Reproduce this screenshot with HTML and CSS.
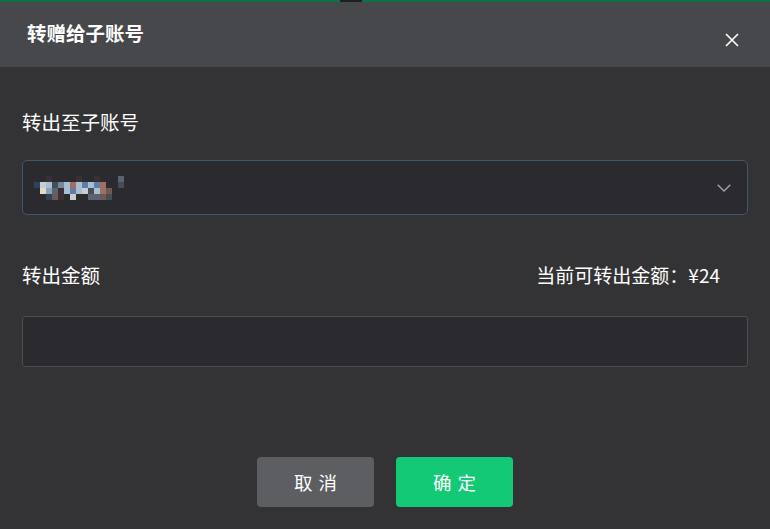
FILE: index.html
```html
<!DOCTYPE html>
<html lang="zh-CN">
<head>
<meta charset="utf-8">
<title>转赠给子账号</title>
<link rel="stylesheet" href="styles.css">
</head>
<body>
<div class="dialog">
  <div class="topline"><span class="notch"></span></div>
  <div class="header">
    <h1 class="title">转赠给子账号</h1>
    <button class="close" aria-label="关闭">
      <svg width="14" height="14" viewBox="0 0 14 14"><path d="M1 1L13 13M13 1L1 13" stroke="#fff" stroke-width="1.6" fill="none"/></svg>
    </button>
  </div>
  <div class="body">
    <div class="label">转出至子账号</div>
    <div class="select">
      <div class="mosaic">
        <span></span><span></span><span class="a"></span><span></span><span></span><span></span><span></span><span class="a"></span><span></span><span></span><span class="a"></span><span></span><span></span><span></span><span class="l"></span>
        <span class="b"></span><span class="c"></span><span class="d"></span><span class="e"></span><span class="f"></span><span class="d"></span><span class="g"></span><span class="d"></span><span class="h"></span><span class="d"></span><span class="h"></span><span class="g"></span><span></span><span></span><span class="e"></span>
        <span></span><span class="i"></span><span class="j"></span><span class="l"></span><span class="a"></span><span class="d"></span><span class="h"></span><span class="d"></span><span class="c"></span><span class="e"></span><span class="d"></span><span class="g"></span><span class="k"></span><span></span><span></span>
        <span></span><span></span><span class="b"></span><span class="k"></span><span class="a"></span><span></span><span class="c"></span><span></span><span></span><span class="l"></span><span class="l"></span><span class="k"></span><span class="e"></span><span></span><span></span>
      </div>
      <svg class="chevron" width="14" height="8" viewBox="0 0 14 8"><path d="M0.7 0.7L7 7L13.3 0.7" stroke="#a0a2a6" stroke-width="1.4" fill="none"/></svg>
    </div>
    <div class="row">
      <div class="label">转出金额</div>
      <div class="avail">当前可转出金额：¥24</div>
    </div>
    <div class="input"></div>
    <div class="actions">
      <button class="btn cancel">取消</button>
      <button class="btn ok">确定</button>
    </div>
  </div>
</div>
</body>
</html>
```
FILE: styles.css
```css
* { box-sizing: border-box; }
html, body { margin: 0; padding: 0; }
body {
  width: 770px;
  height: 529px;
  background: #333335;
  font-family: "Noto Sans CJK SC", "Noto Sans", sans-serif;
  color: #fff;
  overflow: hidden;
}
.dialog { width: 770px; height: 529px; display: flex; flex-direction: column; }
.topline {
  height: 2px;
  background: #0f7048;
  position: relative;
}
.notch {
  position: absolute;
  left: 340px;
  top: 0;
  width: 22px;
  height: 2px;
  background: #1e1f21;
}
.header {
  height: 65px;
  background: #47484b;
  display: flex;
  align-items: center;
  justify-content: space-between;
  padding: 0 31px 0 27px;
}
.title {
  margin: 0;
  font-size: 19.5px;
  font-weight: 700;
  line-height: 24px;
  margin-top: -3px;
}
.close {
  background: none;
  border: 0;
  padding: 0;
  width: 14px;
  height: 14px;
  margin-top: 11px;
  display: block;
}
.close svg { display: block; }
.body {
  flex: 1;
  padding: 43px 22px 0;
  display: flex;
  flex-direction: column;
}
.label {
  font-size: 19.5px;
  line-height: 24px;
}
.select {
  margin-top: 26px;
  height: 55px;
  border: 1px solid #3e576d;
  border-radius: 5px;
  background: #2b2b2f;
  display: flex;
  align-items: center;
  justify-content: space-between;
  padding: 0 16px 0 11px;
}
.mosaic {
  display: grid;
  grid-template-columns: repeat(15, 6px);
  grid-template-rows: repeat(4, 6px);
}
.mosaic span { display: block; }
.mosaic .a { background: #3b2f33; }
.mosaic .b { background: #2e425a; }
.mosaic .c { background: #c9ccd2; }
.mosaic .d { background: #a8bed2; }
.mosaic .e { background: #484c53; }
.mosaic .f { background: #75879c; }
.mosaic .g { background: #9f6f60; }
.mosaic .h { background: #5d7ea5; }
.mosaic .i { background: #e3dcc5; }
.mosaic .j { background: #8da1b7; }
.mosaic .k { background: #6b5a55; }
.mosaic .l { background: #5b6270; }
.chevron { display: block; }
.row {
  margin-top: 48px;
  display: flex;
  justify-content: space-between;
  align-items: center;
}
.avail {
  font-size: 19px;
  line-height: 24px;
  padding-right: 28px;
}
.input {
  margin-top: 29px;
  height: 51px;
  border: 1px solid #4a4d52;
  border-radius: 3px;
  background: #2b2b2f;
}
.actions {
  margin-top: 90px;
  display: flex;
  justify-content: center;
  gap: 22px;
}
.btn {
  width: 117px;
  height: 50px;
  border: 0;
  border-radius: 4px;
  color: #fff;
  font-family: "Noto Sans CJK SC", "Noto Sans", sans-serif;
  font-size: 18.5px;
  letter-spacing: 6px;
  padding: 0 0 0 6px;
}
.cancel { background: #5d5e61; }
.ok { background: #13c975; }
```
